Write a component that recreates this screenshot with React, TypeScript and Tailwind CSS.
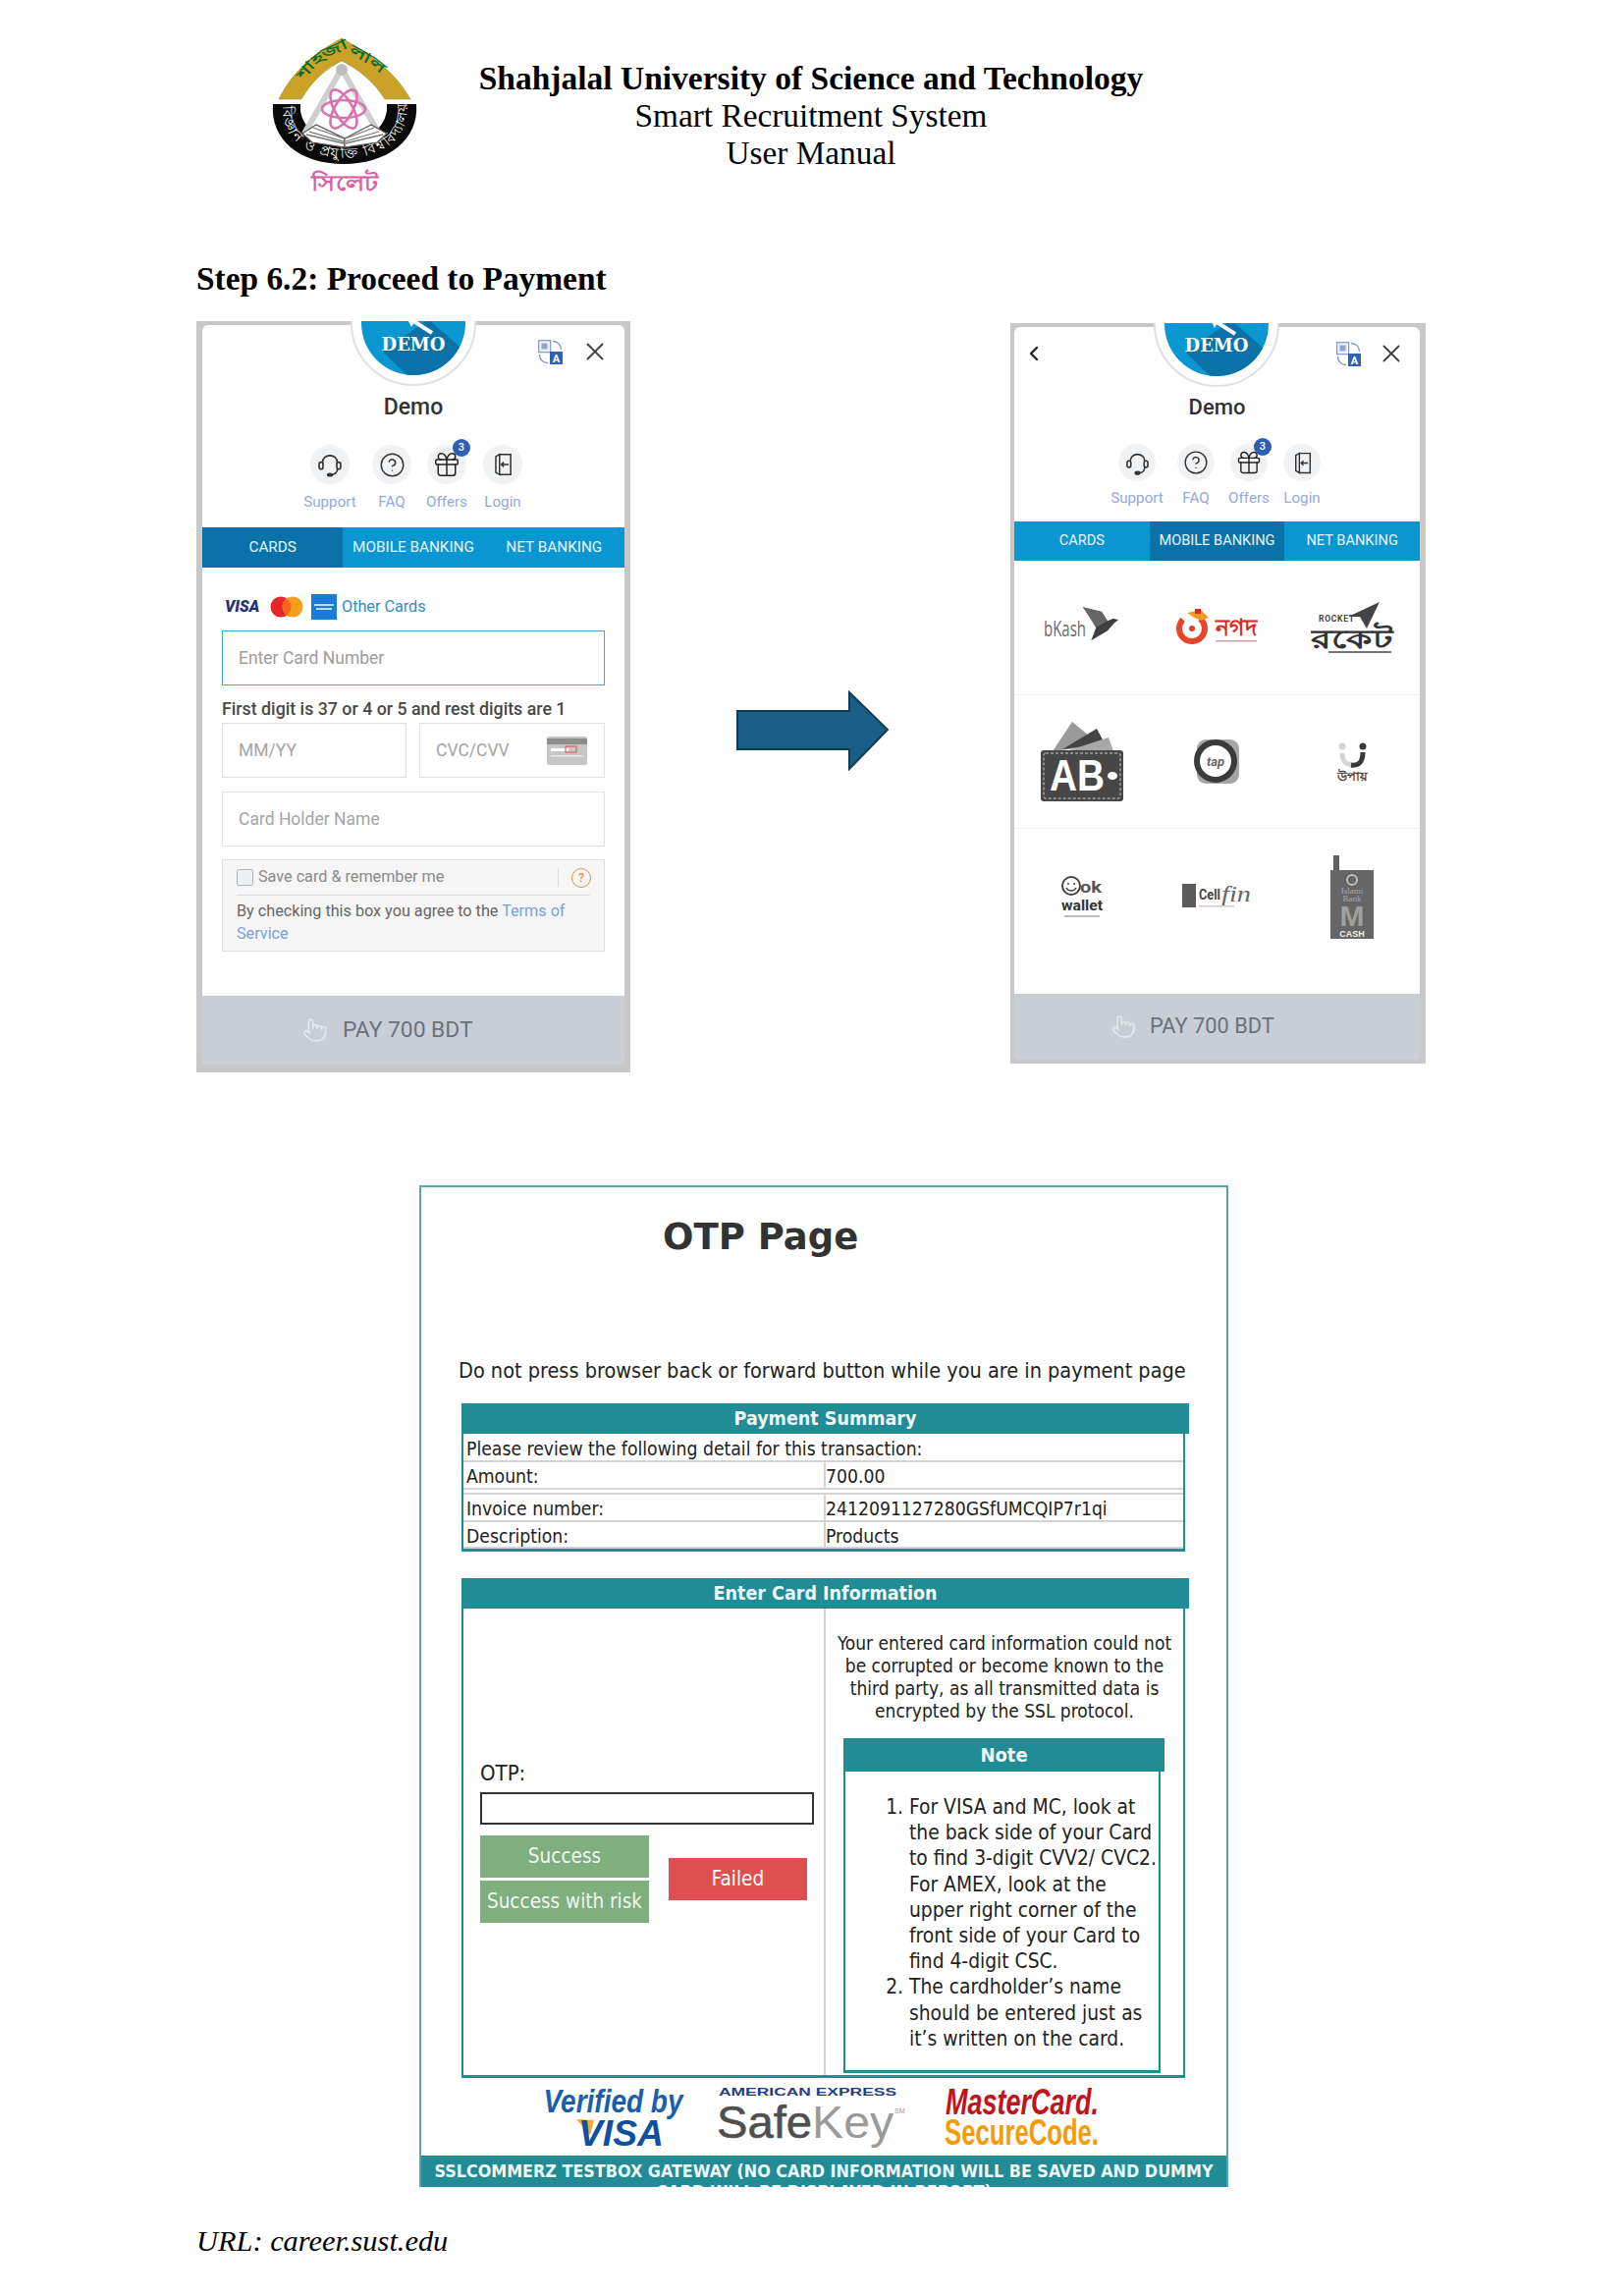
import { ChevronLeft, CircleHelp, Gift, Pointer, X } from 'lucide-react'

const serif = "font-['Liberation_Serif',serif]"
const tahoma = "font-['DejaVu_Sans_Condensed','DejaVu_Sans',sans-serif]"

function Seal() {
    return (
        <svg width="180" height="190" viewBox="0 0 180 190" className="shrink-0">
            <path d="M24 81C38 52 62 33 88 19C114 33 142 52 158 81H132C120 62 104 50 88 42C72 50 58 62 47 81Z" fill="#c9a227" stroke="#8a8a3a" strokeWidth="0.5" />
            <path id="seal-top" d="M49 62C60 46 74 37 88 32C104 37 120 47 135 62" fill="none" />
            <text fontSize="14" fontWeight="700" fill="#0d6b2e" fontFamily="'Noto Sans',sans-serif" textLength="96" lengthAdjust="spacingAndGlyphs">
                <textPath href="#seal-top">শাহজালাল</textPath>
            </text>
            <path d="M18 86H46C44 106 62 124 90 127C118 124 136 106 134 86H164C167 122 135 147 90 147C45 147 15 122 18 86Z" fill="#0a0a0a" />
            <path id="seal-band" d="M28 88C25 118 52 141 90 141C130 141 158 118 154 88" fill="none" />
            <text fontSize="14" fill="#fff" fontFamily="'Noto Sans',sans-serif" textLength="190" lengthAdjust="spacing">
                <textPath href="#seal-band">বিজ্ঞান ও প্রযুক্তি বিশ্ববিদ্যালয়</textPath>
            </text>
            <path d="M88 50L50 116M88 50L126 116" stroke="#cfcfcf" strokeWidth="6" fill="none" />
            <circle cx="88" cy="51" r="6" fill="#bdbdbd" />
            <g fill="none" stroke="#d873ad" strokeWidth="2.6">
                <ellipse cx="90" cy="91" rx="22" ry="9" />
                <ellipse cx="90" cy="91" rx="22" ry="9" transform="rotate(60 90 91)" />
                <ellipse cx="90" cy="91" rx="22" ry="9" transform="rotate(120 90 91)" />
            </g>
            <path d="M48 116L62 107L91 121V130L58 125Z" fill="#fff" stroke="#555" strokeWidth="1.2" />
            <path d="M134 116L118 107L91 121V130L124 125Z" fill="#fff" stroke="#555" strokeWidth="1.2" />
            <path d="M52 117L90 126M55 114L90 124M59 110L90 121M130 117L92 126M126 114L92 124M121 110L92 121" stroke="#777" strokeWidth="1.3" />
            <text x="57" y="174" fontSize="22" fontWeight="700" fill="#d95fa3" textLength="68" lengthAdjust="spacingAndGlyphs" fontFamily="'Noto Sans',sans-serif">সিলেট</text>
        </svg>
    )
}

function DemoBadge({ className }: { className: string }) {
    return (
        <div className={className}>
            <svg width="128" height="128" viewBox="-64 -64 128 128">
                <circle r="63" fill="#fff" stroke="#dfe1e5" strokeWidth="2" />
                <clipPath id="badge-clip">
                    <circle r="53" />
                </clipPath>
                <circle r="53" fill="#0a96d1" />
                <polygon points="-31,29 -4,56 60,56 56,32 15,-4" fill="#0a72a8" clipPath="url(#badge-clip)" />
                <path d="M-3 -4L19 10" stroke="#fff" strokeWidth="4" />
                <path d="M-8 -8L5 -8L-2 4Z" fill="#fff" />
                <text x="0" y="28" textAnchor="middle" fontSize="18" fontWeight="700" fill="#fff" fontFamily="'DejaVu Serif',serif">DEMO</text>
            </svg>
        </div>
    )
}

function TranslateIcon() {
    return (
        <svg width="25" height="25" viewBox="0 0 25 25">
            <rect x="0.7" y="0.7" width="12" height="12" fill="#eef1f8" stroke="#7f96c8" strokeWidth="1.2" />
            <rect x="3.5" y="3.5" width="6" height="6" fill="#93a5cf" />
            <rect x="12" y="12" width="13" height="13" fill="#2f62b3" />
            <text x="18.5" y="23" textAnchor="middle" fontSize="11" fontWeight="700" fill="#fff" fontFamily="Roboto,sans-serif">A</text>
            <path d="M15 1.5C20 1.5 23.5 5 23.5 10M10 23.5C5 23.5 1.5 20 1.5 15" fill="none" stroke="#7f96c8" strokeWidth="1.4" />
        </svg>
    )
}

function HeadsetIcon({ size }: { size: number }) {
    return (
        <svg width={size} height={size} viewBox="0 0 24 24" fill="none" stroke="#333" strokeWidth="1.4">
            <path d="M5.5 10.5C5.5 2 18.5 2 18.5 10.5" />
            <rect x="2.6" y="10" width="3.4" height="6" rx="1.7" />
            <rect x="18" y="10" width="3.4" height="6" rx="1.7" />
            <path d="M18.5 16C18.5 19 16 21 13 21" />
            <ellipse cx="12" cy="21" rx="2" ry="1.1" fill="#333" />
        </svg>
    )
}

function LoginIcon({ size }: { size: number }) {
    return (
        <svg width={size} height={size} viewBox="0 0 24 24" fill="none" stroke="#333" strokeWidth="1.4">
            <path d="M9 2.5H19.5V21.5H9" />
            <path d="M9 2.5L5.5 4.5V19.5L9 21.5Z" />
            <path d="M17.5 12H11M13 9.8L10.8 12L13 14.2" />
        </svg>
    )
}

function ActionItem({
    width,
    label,
    circle,
    children,
    badge,
    gap,
}: {
    width: string
    label: string
    circle: string
    children: React.ReactNode
    badge?: string
    gap: string
}) {
    return (
        <div className={`flex flex-col items-center ${width}`}>
            <div className={`relative flex items-center justify-center rounded-full bg-[#f1f2f4] ${circle}`}>
                {children}
                {badge && (
                    <span className="absolute -top-[6px] -right-[4px] flex h-[18px] w-[18px] items-center justify-center rounded-full bg-[#2d5fb3] text-[11px] font-medium text-white">
                        {badge}
                    </span>
                )}
            </div>
            <span className={`h-[18px] text-[15.2px] leading-[18px] text-[#93a9dd] ${gap}`}>{label}</span>
        </div>
    )
}

function PayBar({ className, textClass, iconSize }: { className: string; textClass: string; iconSize: number }) {
    return (
        <div className={`flex items-center bg-[#c9ced6] ${className}`}>
            <Pointer size={iconSize} strokeWidth={1.5} className="text-[#e4e7ec]" />
            <span className={`text-[#6b727c] ${textClass}`}>PAY 700 BDT</span>
        </div>
    )
}

function CardsWidget() {
    return (
        <div className="relative h-[765px] w-[442px] shrink-0 overflow-hidden bg-[#c8c8c8] pt-[4px] pr-[6px] pl-[6px] font-['Roboto',sans-serif]">
            <div className="flex h-[753px] flex-col overflow-hidden rounded-[6px] bg-white">
                <div className="flex h-[54px] items-center justify-end gap-[18px] pr-[15px]">
                    <TranslateIcon />
                    <X size={30} strokeWidth={1.6} className="text-[#444]" />
                </div>
                <div className="mt-[15px] h-[30px] text-center text-[23px] leading-[30px] font-medium text-[#333]">Demo</div>
                <div className="mt-[23px] flex justify-center">
                    <ActionItem width="w-[70px]" circle="h-[40px] w-[40px]" gap="mt-[9px]" label="Support">
                        <HeadsetIcon size={28} />
                    </ActionItem>
                    <ActionItem width="w-[56px]" circle="h-[40px] w-[40px]" gap="mt-[9px]" label="FAQ">
                        <CircleHelp size={27} strokeWidth={1.3} className="text-[#333]" />
                    </ActionItem>
                    <ActionItem width="w-[56px]" circle="h-[40px] w-[40px]" gap="mt-[9px]" label="Offers" badge="3">
                        <Gift size={30} strokeWidth={1.2} className="text-[#222]" />
                    </ActionItem>
                    <ActionItem width="w-[58px]" circle="h-[40px] w-[40px]" gap="mt-[9px]" label="Login">
                        <LoginIcon size={26} />
                    </ActionItem>
                </div>
                <div className="mt-[17px] grid h-[41px] grid-cols-3 bg-[#0a96d1] text-[15.3px] text-[#e6f5fb]">
                    <div className="flex items-center justify-center bg-[#0a72a8]">CARDS</div>
                    <div className="flex items-center justify-center">MOBILE BANKING</div>
                    <div className="flex items-center justify-center">NET BANKING</div>
                </div>
                <div className="flex flex-1 flex-col px-[20px]">
                    <div className="mt-[27px] flex h-[26px] items-center">
                        <span className="ml-[3px] w-[46px] text-[16px] font-black text-[#25307a] italic">VISA</span>
                        <svg width="34" height="22" viewBox="0 0 34 22" className="shrink-0">
                            <circle cx="11" cy="11" r="10.5" fill="#e8262a" />
                            <circle cx="23" cy="11" r="10.5" fill="#f79e1b" />
                            <path d="M17 2.4a10.5 10.5 0 0 1 0 17.2a10.5 10.5 0 0 1 0-17.2Z" fill="#f4641d" />
                        </svg>
                        <div className="ml-[8px] flex h-[26px] w-[26px] flex-col items-center justify-center gap-[2px] bg-[#1c7bd6]">
                            <span className="h-[2px] w-[20px] bg-[#bcdcf6]" />
                            <span className="h-[2px] w-[16px] bg-[#bcdcf6]" />
                        </div>
                        <span className="ml-[5px] text-[16.2px] text-[#2d8fc0]">Other Cards</span>
                    </div>
                    <div className="mt-[11px] flex h-[56px] items-center border-[1.5px] border-[#45aad2] pl-[16px] text-[17.5px] text-[#9c9c9c]">
                        Enter Card Number
                    </div>
                    <div className="mt-[14px] h-[20px] text-[17.8px] leading-[20px] font-medium whitespace-nowrap text-[#484848]">
                        First digit is 37 or 4 or 5 and rest digits are 1
                    </div>
                    <div className="mt-[4px] flex gap-[13px]">
                        <div className="flex h-[56px] w-[188px] items-center border border-[#dfe1e4] pl-[16px] text-[17.5px] text-[#a4a4a4]">MM/YY</div>
                        <div className="flex h-[56px] w-[189px] items-center justify-between border border-[#dfe1e4] pr-[17px] pl-[16px] text-[17.5px] text-[#a4a4a4]">
                            CVC/CVV
                            <svg width="41" height="29" viewBox="0 0 41 29">
                                <rect width="41" height="29" rx="2" fill="#c6c6c6" />
                                <rect y="2" width="41" height="6" fill="#8e8e8e" />
                                <rect x="4" y="12" width="18" height="3" fill="#fff" />
                                <rect x="19" y="10" width="11" height="6" fill="none" stroke="#d9534f" />
                                <rect x="4" y="19" width="33" height="1.5" fill="#e4e4e4" />
                            </svg>
                        </div>
                    </div>
                    <div className="mt-[14px] flex h-[56px] items-center border border-[#dfe1e4] pl-[16px] text-[17.5px] text-[#a4a4a4]">Card Holder Name</div>
                    <div className="mt-[13px] h-[94px] border border-[#dddddd] bg-[#f6f6f6] px-[14px]">
                        <div className="flex h-[36px] items-center border-b border-[#dcdcdc]">
                            <span className="h-[17px] w-[17px] rounded-[2px] border border-[#b5b5b5] bg-[#eef1f3]" />
                            <span className="ml-[5px] text-[16.2px] text-[#8a8a8a]">Save card &amp; remember me</span>
                            <span className="ml-auto h-[19px] w-px bg-[#dcdcdc]" />
                            <span className="mr-[-1px] ml-[13px] flex h-[20px] w-[20px] items-center justify-center rounded-full border-[1.5px] border-[#e8904a] text-[13px] font-medium text-[#e8904a]">?</span>
                        </div>
                        <p className="mt-[4px] text-[16.2px] leading-[23px] text-[#666]">
                            By checking this box you agree to the <span className="text-[#7b9fdc]">Terms of Service</span>
                        </p>
                    </div>
                </div>
                <PayBar className="h-[70px] gap-[15px] pl-[102px]" textClass="text-[22.8px]" iconSize={26} />
            </div>
            <DemoBadge className="absolute top-[-62px] left-[157px]" />
        </div>
    )
}

function BkashLogo() {
    return (
        <svg width="78" height="44" viewBox="0 0 78 44">
            <text x="0" y="31" fontSize="21" fill="#6a6a6a" textLength="43" lengthAdjust="spacingAndGlyphs" fontFamily="'Open Sans',sans-serif">bKash</text>
            <polygon points="40,1.3 59,6 65,15.3 71,12.7 76,14.3 72.3,17 65,25.3 48.3,35.3 53.3,22 48.3,13.7" fill="#3f3f3f" />
            <polygon points="40,1.3 59,6 65,15.3 53.3,22 48.3,13.7" fill="#666" />
        </svg>
    )
}

function NagadLogo() {
    return (
        <svg width="84" height="40" viewBox="0 0 84 40">
            <circle cx="17" cy="21" r="13" fill="none" stroke="#e8432c" strokeWidth="6" strokeDasharray="62 20" transform="rotate(-50 17 21)" />
            <path d="M12 5L26 2L34 10L26 13L18 9Z" fill="#f4991f" />
            <rect x="20" y="1" width="6" height="5" fill="#d92a2a" />
            <circle cx="17" cy="21" r="3" fill="#d9433a" />
            <text x="41" y="28" fontSize="23" fontWeight="700" fill="#d92a2a" textLength="42" lengthAdjust="spacingAndGlyphs" fontFamily="'Noto Sans',sans-serif">নগদ</text>
            <rect x="41" y="33" width="42" height="1.5" fill="#c9a0a0" />
        </svg>
    )
}

function RocketLogo() {
    return (
        <svg width="85" height="58" viewBox="0 0 85 58">
            <polygon points="38,18 70,3 57,30 50,18" fill="#444" />
            <text x="8" y="23" fontSize="8.5" fontWeight="700" fill="#444" fontFamily="Roboto,sans-serif" textLength="36">ROCKET</text>
            <text x="0" y="50" fontSize="27" fontWeight="700" fill="#333" textLength="84" lengthAdjust="spacingAndGlyphs" fontFamily="'Noto Sans',sans-serif">রকেট</text>
            <rect x="18" y="53" width="64" height="2" fill="#777" />
        </svg>
    )
}

function AbLogo() {
    return (
        <svg width="86" height="84" viewBox="0 0 86 84">
            <polygon points="13,31 33,1 62,25" fill="#9a9a9a" />
            <polygon points="23,29 58,8 66,23" fill="#444" />
            <polygon points="27,31 70,17 75,31" fill="#a8a8a8" />
            <rect x="1" y="30" width="84" height="52" rx="3" fill="#474747" />
            <rect x="4" y="33" width="78" height="46" rx="2" fill="none" stroke="#c8c8c8" strokeWidth="1" strokeDasharray="3 2" />
            <text x="10" y="71" fontSize="44" fontWeight="700" fill="#fff" textLength="56" lengthAdjust="spacingAndGlyphs" fontFamily="'Liberation Sans',sans-serif">AB</text>
            <ellipse cx="74" cy="56" rx="5" ry="4" fill="#fff" />
        </svg>
    )
}

function TapLogo() {
    return (
        <svg width="46" height="48" viewBox="0 0 46 48">
            <rect x="3" y="1" width="43" height="45" rx="9" fill="#a5a5a5" />
            <circle cx="22" cy="23" r="19" fill="#fff" stroke="#3b3b3b" strokeWidth="6" />
            <text x="22" y="28" textAnchor="middle" fontSize="13" fontWeight="700" fontStyle="italic" fill="#666" fontFamily="Roboto,sans-serif">tap</text>
        </svg>
    )
}

function UpayLogo() {
    return (
        <svg width="34" height="48" viewBox="0 0 34 48">
            <circle cx="7" cy="8" r="3.5" fill="#d4d4d4" />
            <circle cx="28" cy="8" r="3.5" fill="#3a3a3a" />
            <path d="M7 15C7 24 12 27 17 26" fill="none" stroke="#d4d4d4" strokeWidth="5" />
            <path d="M28 14C28 24 24 28 16 27" fill="none" stroke="#3a3a3a" strokeWidth="5" />
            <text x="17" y="43" textAnchor="middle" fontSize="13" fontWeight="700" fill="#444" fontFamily="'Noto Sans',sans-serif">উপায়</text>
        </svg>
    )
}

function OkWalletLogo() {
    return (
        <svg width="44" height="50" viewBox="0 0 44 50">
            <circle cx="11" cy="14" r="9" fill="none" stroke="#444" strokeWidth="2" />
            <circle cx="8" cy="12" r="1" fill="#444" />
            <circle cx="14" cy="12" r="1" fill="#444" />
            <path d="M6 16C8 20 14 20 16 16" fill="none" stroke="#444" strokeWidth="1.5" />
            <text x="20" y="21" fontSize="16" fontWeight="700" fill="#555" textLength="22" lengthAdjust="spacingAndGlyphs" fontFamily="Roboto,sans-serif">ok</text>
            <text x="1" y="39" fontSize="15" fontWeight="700" fill="#333" textLength="42" lengthAdjust="spacingAndGlyphs" fontFamily="Roboto,sans-serif">wallet</text>
            <rect x="4" y="44" width="36" height="2" fill="#bbb" />
        </svg>
    )
}

function CellfinLogo() {
    return (
        <svg width="72" height="28" viewBox="0 0 72 28">
            <rect x="1" y="1" width="14" height="24" fill="#5b5b5b" />
            <text x="18" y="17" fontSize="14" fontWeight="700" fill="#444" textLength="22" lengthAdjust="spacingAndGlyphs" fontFamily="Roboto,sans-serif">Cell</text>
            <text x="41" y="19" fontSize="24" fontStyle="italic" fill="#666" textLength="30" lengthAdjust="spacingAndGlyphs" fontFamily="'Liberation Serif',serif">fin</text>
            <rect x="18" y="23" width="36" height="1.5" fill="#ccc" />
        </svg>
    )
}

function McashLogo() {
    return (
        <svg width="46" height="86" viewBox="0 0 46 86">
            <rect x="4" y="1" width="6" height="16" fill="#5f5f5f" />
            <rect x="1" y="16" width="44" height="70" fill="#666" />
            <circle cx="23" cy="26" r="5" fill="none" stroke="#bdbdbd" strokeWidth="2" />
            <text x="23" y="40" textAnchor="middle" fontSize="9" fill="#a8a8a8" fontFamily="'Liberation Serif',serif">Islami</text>
            <text x="23" y="48" textAnchor="middle" fontSize="9" fill="#a8a8a8" fontFamily="'Liberation Serif',serif">Bank</text>
            <text x="23" y="73" textAnchor="middle" fontSize="30" fontWeight="700" fill="#a0a0a0" fontFamily="'Liberation Sans',sans-serif">M</text>
            <text x="23" y="84" textAnchor="middle" fontSize="9" fontWeight="700" fill="#eee" fontFamily="'Liberation Sans',sans-serif">CASH</text>
        </svg>
    )
}

function MobileWidget() {
    return (
        <div className="relative mt-[2px] ml-[123px] h-[754px] w-[423px] shrink-0 overflow-hidden bg-[#c8c8c8] pt-[4px] pr-[6px] pl-[4px] font-['Roboto',sans-serif]">
            <div className="flex h-[746px] flex-col overflow-hidden rounded-[6px] bg-white">
                <div className="flex h-[54px] items-center gap-[16px] pr-[14px] pl-[8px]">
                    <ChevronLeft size={24} strokeWidth={2.4} className="mr-auto text-[#222]" />
                    <TranslateIcon />
                    <X size={30} strokeWidth={1.5} className="text-[#444]" />
                </div>
                <div className="mt-[13px] h-[30px] text-center text-[22px] leading-[30px] font-medium text-[#333]">Demo</div>
                <div className="mt-[22px] flex pl-[90px]">
                    <ActionItem width="w-[70px]" circle="h-[38px] w-[38px]" gap="mt-[8px]" label="Support">
                        <HeadsetIcon size={27} />
                    </ActionItem>
                    <ActionItem width="w-[50px]" circle="h-[38px] w-[38px]" gap="mt-[8px]" label="FAQ">
                        <CircleHelp size={26} strokeWidth={1.3} className="text-[#333]" />
                    </ActionItem>
                    <ActionItem width="w-[58px]" circle="h-[38px] w-[38px]" gap="mt-[8px]" label="Offers" badge="3">
                        <Gift size={28} strokeWidth={1.2} className="text-[#222]" />
                    </ActionItem>
                    <ActionItem width="w-[50px]" circle="h-[38px] w-[38px]" gap="mt-[8px]" label="Login">
                        <LoginIcon size={25} />
                    </ActionItem>
                </div>
                <div className="mt-[15px] grid h-[40px] grid-cols-3 bg-[#0a96d1] text-[14.6px] text-[#e6f5fb]">
                    <div className="flex items-center justify-center">CARDS</div>
                    <div className="flex items-center justify-center bg-[#0a72a8]">MOBILE BANKING</div>
                    <div className="flex items-center justify-center">NET BANKING</div>
                </div>
                <div className="grid h-[137px] grid-cols-3 items-center justify-items-center border-b border-[#f0f0f0]">
                    <BkashLogo />
                    <NagadLogo />
                    <RocketLogo />
                </div>
                <div className="grid h-[136px] grid-cols-3 items-center justify-items-center border-b border-[#f0f0f0]">
                    <AbLogo />
                    <TapLogo />
                    <UpayLogo />
                </div>
                <div className="grid flex-1 grid-cols-3 items-center justify-items-center pb-[30px]">
                    <OkWalletLogo />
                    <CellfinLogo />
                    <McashLogo />
                </div>
                <PayBar className="h-[67px] gap-[14px] pl-[99px]" textClass="text-[21.8px]" iconSize={25} />
            </div>
            <DemoBadge className="absolute top-[-63px] left-[146px]" />
        </div>
    )
}

function SectionHeader({ title }: { title: string }) {
    return <div className="flex h-[31px] w-[741px] items-center justify-center bg-[#218b96] text-[19.5px] font-bold text-[#eef8f8]">{title}</div>
}

function SummaryRow({ label, value, className }: { label: string; value: string; className: string }) {
    return (
        <div className={`grid grid-cols-[369px_1fr] border-b-2 border-[#d4d4d4] ${className}`}>
            <div className="border-r-2 border-[#d4d4d4] pt-[3px] pl-[3px] leading-[24px]">{label}</div>
            <div className="pt-[3px] leading-[24px]">{value}</div>
        </div>
    )
}

function OtpPage() {
    return (
        <div className={`mt-[115px] ml-[427px] h-[1020px] w-[824px] overflow-hidden border-x-2 border-t-2 border-[#5aa5ab] text-[#222] ${tahoma}`}>
            <h1 className="mt-[29px] pl-[246px] font-['DejaVu_Sans',sans-serif] text-[37px] leading-[44px] font-bold text-[#333]">OTP Page</h1>
            <p className="mt-[102px] pl-[38px] text-[21.5px] leading-[24px] whitespace-nowrap">Do not press browser back or forward button while you are in payment page</p>
            <div className="mt-[21px] ml-[41px]">
                <SectionHeader title="Payment Summary" />
                <div className="w-[737px] border-x-2 border-b-[3px] border-[#218b96] text-[19.2px]">
                    <div className="h-[29px] border-b-2 border-[#d4d4d4] pt-[4px] pl-[3px] leading-[24px] whitespace-nowrap">Please review the following detail for this transaction:</div>
                    <SummaryRow label="Amount:" value="700.00" className="h-[28px]" />
                    <div className="h-[3px]" />
                    <SummaryRow label="Invoice number:" value="2412091127280GSfUMCQIP7r1qi" className="h-[30px] border-t-2" />
                    <SummaryRow label="Description:" value="Products" className="h-[27px] border-b-0" />
                </div>
                <div className="mt-[27px]">
                    <SectionHeader title="Enter Card Information" />
                </div>
                <div className="grid h-[478px] w-[737px] grid-cols-[369px_1fr] border-x-2 border-b-[3px] border-[#218b96]">
                    <div className="border-r-2 border-[#d4d4d4] pt-[156px] pl-[17px]">
                        <div className="text-[22px] leading-[24px]">OTP:</div>
                        <div className="mt-[7px] h-[33px] w-[340px] border-2 border-[#333]" />
                        <div className="mt-[11px] flex items-center text-[20.5px] text-[#eef6ee]">
                            <div className="flex w-[172px] flex-col gap-[3px]">
                                <div className="flex h-[43px] items-center justify-center bg-[#7fae7f]">Success</div>
                                <div className="flex h-[43px] items-center justify-center bg-[#7fae7f] whitespace-nowrap">Success with risk</div>
                            </div>
                            <div className="ml-[20px] flex h-[43px] w-[141px] items-center justify-center bg-[#e04f50] text-white">Failed</div>
                        </div>
                    </div>
                    <div>
                        <p className="pt-[24px] text-center text-[19px] leading-[23px]">
                            Your entered card information could not
                            <br />
                            be corrupted or become known to the
                            <br />
                            third party, as all transmitted data is
                            <br />
                            encrypted by the SSL protocol.
                        </p>
                        <div className="mt-[16px] ml-[18px]">
                            <div className="flex h-[34px] w-[327px] items-center justify-center bg-[#218b96] text-[20px] font-bold text-[#eef8f8]">Note</div>
                            <div className="h-[307px] w-[323px] border-x-2 border-b-[3px] border-[#218b96] pt-[23px]">
                                <ol className="list-decimal pl-[65px] text-[20.8px] leading-[26.2px]">
                                    <li className="whitespace-nowrap">
                                        For VISA and MC, look at
                                        <br />
                                        the back side of your Card
                                        <br />
                                        to find 3-digit CVV2/ CVC2.
                                        <br />
                                        For AMEX, look at the
                                        <br />
                                        upper right corner of the
                                        <br />
                                        front side of your Card to
                                        <br />
                                        find 4-digit CSC.
                                    </li>
                                    <li className="whitespace-nowrap">
                                        The cardholder’s name
                                        <br />
                                        should be entered just as
                                        <br />
                                        it’s written on the card.
                                    </li>
                                </ol>
                            </div>
                        </div>
                    </div>
                </div>
            </div>
            <svg width="820" height="79" viewBox="0 0 820 79" className="block">
                <g fontFamily="'Liberation Sans',sans-serif">
                    <text x="124.5" y="35" fontSize="34" fontWeight="700" fontStyle="italic" fill="#1a5fa8" textLength="142" lengthAdjust="spacingAndGlyphs">Verified by</text>
                    <polygon points="158,42 176,43 172,58" fill="#f0a92b" />
                    <text x="160" y="69" fontSize="36" fontWeight="700" fontStyle="italic" fill="#10509e" textLength="87" lengthAdjust="spacingAndGlyphs">VISA</text>
                    <text x="303" y="18" fontSize="11" fontWeight="700" fill="#1f3f7f" textLength="181" lengthAdjust="spacingAndGlyphs">AMERICAN EXPRESS</text>
                    <text x="301" y="61" fontSize="46" fill="#4f4f4f" stroke="#4f4f4f" strokeWidth="0.6" textLength="97" lengthAdjust="spacingAndGlyphs">Safe</text>
                    <text x="398" y="61" fontSize="46" fill="#9a9a9a" textLength="83" lengthAdjust="spacingAndGlyphs">Key</text>
                    <text x="482" y="36" fontSize="7" fill="#999">SM</text>
                    <text x="534" y="37" fontSize="36" fontWeight="700" fontStyle="italic" fill="#c0141a" textLength="156" lengthAdjust="spacingAndGlyphs">MasterCard.</text>
                    <text x="533" y="68" fontSize="36" fontWeight="700" fill="#f49b0c" textLength="157" lengthAdjust="spacingAndGlyphs">SecureCode.</text>
                </g>
            </svg>
            <div className="h-[33px] overflow-hidden bg-[#218b96] pt-[5px] text-center text-[17.8px] leading-[21px] font-bold whitespace-nowrap text-[#eef8f8]">
                SSLCOMMERZ TESTBOX GATEWAY (NO CARD INFORMATION WILL BE SAVED AND DUMMY
                <br />
                CARD WILL BE DISPLAYED IN REPORT)
            </div>
        </div>
    )
}

export default function App() {
    return (
        <div className="h-[2338px] w-[1654px] overflow-hidden bg-white text-black">
            <header className={`flex pt-[20px] pl-[260px] ${serif}`}>
                <Seal />
                <div className="mt-[41px] ml-[36px] w-[700px] text-center text-[33.3px] leading-[38px]">
                    <div className="text-[33.5px] font-bold">Shahjalal University of Science and Technology</div>
                    <div>Smart Recruitment System</div>
                    <div>User Manual</div>
                </div>
            </header>
            <h2 className={`mt-[55px] pl-[200px] text-[33.4px] leading-[38px] font-bold ${serif}`}>Step 6.2: Proceed to Payment</h2>
            <div className="mt-[24px] flex items-start pl-[200px]">
                <CardsWidget />
                <svg width="157" height="82" viewBox="0 0 157 82" className="mt-[376px] ml-[107px] shrink-0">
                    <path d="M2 21H116V2L155 40L116 80V60H2Z" fill="#1a5f85" stroke="#0f3a55" strokeWidth="2" />
                </svg>
                <MobileWidget />
            </div>
            <OtpPage />
            <p className={`mt-[37px] pl-[200px] text-[30.4px] leading-[36px] italic ${serif}`}>URL: career.sust.edu</p>
        </div>
    )
}
